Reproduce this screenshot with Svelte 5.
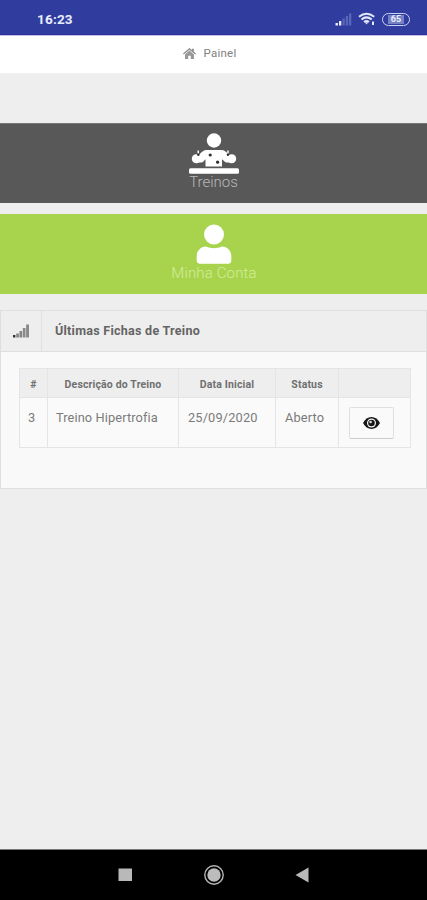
<script>
  const columns = ['#', 'Descrição do Treino', 'Data Inicial', 'Status', ''];
  const rows = [{ id: 3, name: 'Treino Hipertrofia', date: '25/09/2020', status: 'Aberto' }];
</script>

<div class="screen">
  <header class="status">
    <span class="clock">16:23</span>
    <div class="indicators">
      <svg class="signal" width="17" height="13" viewBox="0 0 17 13">
        <path d="M.5 10H3v2.500H.5zM4 8h2.300v4.500H4z" fill="#e7ebfa" />
        <path d="M7.500 5.500h2.300v7H7.500zM10.800 3h2.300v9.500h-2.300zM14 .5h2.300v12H14z" fill="#5a66b8" />
      </svg>
      <svg class="wifi" width="18" height="14" viewBox="0 0 18 14" fill="none" stroke="#e4e9fa" stroke-width="2">
        <path d="M1 4.800Q8.500-1.400 16.200 4.800M3.500 7.500Q8.500 3.300 13.700 7.500M6 10Q8.500 8 11 10" />
        <path d="M6.800 10.200h3.500l-1.800 2.400z" fill="#e4e9fa" stroke="none" />
        <path d="M15 9.500v3.500" stroke-width="2" />
      </svg>
      <span class="battery"><b>65</b></span>
    </div>
  </header>

  <nav class="crumb">
    <svg width="13" height="11" viewBox="0 0 13 11">
      <path d="M0 5.500 6.500 0 9 2.100V.7h1.800v2.900L13 5.500l-.8 1-5.700-4.800L.8 6.500z" fill="#8c8c8c" />
      <path d="m2 6.400 4.500-3.800L11 6.400V11H7.800V7.800H5.200V11H2z" fill="#999" />
    </svg>
    <span>Painel</span>
  </nav>

  <main>
    <section class="tile dark">
      <svg width="50" height="42" viewBox="0 0 50 42">
        <g fill="#fff">
          <circle cx="25" cy="7.500" r="7.200" />
          <path d="M18 17h14c3.600 0 5.600 2 8 5l-3.500 7.200-3.500-3V33.500H16.500v-7.300l-3 3L10 22c2.400-3 4.400-5 8-5z" />
          <circle cx="7.300" cy="25.800" r="4.500" />
          <circle cx="42.700" cy="25.800" r="4.500" />
          <rect x="6.500" y="22" width="8" height="7.500" rx="2" />
          <rect x="35.500" y="22" width="8" height="7.500" rx="2" />
          <path d="M8.500 17.500h1.500v3H8.500zM38.200 17.500h1.500v3h-1.500z" />
          <rect x="0" y="35.300" width="50" height="5.500" rx="1.500" />
        </g>
        <g fill="#303030">
          <circle cx="9.300" cy="21.700" r="1.200" />
          <circle cx="38.900" cy="21.700" r="1.200" />
          <circle cx="21.200" cy="22" r="1.600" />
          <circle cx="28.600" cy="29.200" r="1.600" />
        </g>
      </svg>
      <span class="treinos">Treinos</span>
    </section>

    <section class="tile green">
      <svg width="36" height="42" viewBox="0 0 36 42" fill="#fff">
        <circle cx="18" cy="10.500" r="10" />
        <path d="M10 22.400c5 2.300 11 2.300 16 0 5.500.3 9.300 4.200 9.300 9.600v4.500c0 2-1.300 3.300-3.300 3.300H4c-2 0-3.300-1.300-3.300-3.300V32c0-5.400 3.800-9.300 9.300-9.600z" />
      </svg>
      <span class="conta">Minha Conta</span>
    </section>

    <section class="panel">
      <div class="panel-head">
        <div class="panel-icon">
          <svg width="17" height="14" viewBox="0 0 17 14">
            <path d="M0 11h2.400v2.500H0z" fill="#333" />
            <path d="M3.200 9.500h2.700v4H3.200zM6.500 7h2.700v6.500H6.500z" fill="#858585" />
            <path d="M9.800 4h2.700v9.500H9.800zM13.100.5h2.900v13h-2.900z" fill="#8a8a8a" />
          </svg>
        </div>
        <h2>Últimas Fichas de Treino</h2>
      </div>
      <div class="panel-body">
        <table>
          <colgroup><col class="c1" /><col class="c2" /><col class="c3" /><col class="c4" /><col class="c5" /></colgroup>
          <thead>
            <tr>{#each columns as c}<th>{c}</th>{/each}</tr>
          </thead>
          <tbody>
            {#each rows as r}
              <tr>
                <td>{r.id}</td>
                <td>{r.name}</td>
                <td class="wide">{r.date}</td>
                <td class="wide">{r.status}</td>
                <td class="action">
                  <button aria-label="Ver">
                    <svg width="17" height="12" viewBox="0 0 17 12">
                      <path d="M0 6C2 2.200 5 0 8.500 0S15 2.200 17 6c-2 3.800-5 6-8.500 6S2 9.800 0 6z" fill="#161616" />
                      <circle cx="8.500" cy="6" r="4.500" fill="#fafafa" />
                      <circle cx="8.500" cy="6" r="3.300" fill="#161616" />
                      <circle cx="7.600" cy="5" r="1.300" fill="#ddd" />
                    </svg>
                  </button>
                </td>
              </tr>
            {/each}
          </tbody>
        </table>
      </div>
    </section>
  </main>

  <footer class="navbar">
    <svg width="14" height="14"><rect x=".5" y=".5" width="13.500" height="12.500" fill="#b9b9b9" /></svg>
    <svg width="20" height="20" viewBox="0 0 20 20">
      <circle cx="10" cy="10" r="9.200" fill="none" stroke="#b5b5b5" stroke-width="1.400" />
      <circle cx="10" cy="10" r="6.700" fill="#bcbcbc" />
    </svg>
    <svg width="14" height="16" viewBox="0 0 14 16"><path d="M.5 8 13.500.5v15z" fill="#b9b9b9" /></svg>
  </footer>
</div>

<style>
  :global(body) { margin: 0; background: #eee; }
  .screen {
    width: 427px;
    height: 900px;
    display: flex;
    flex-direction: column;
    overflow: hidden;
    background: #eee;
    color: #666;
    font-family: Roboto, sans-serif;
  }
  .status {
    box-sizing: border-box;
    height: 35px;
    flex: none;
    display: flex;
    justify-content: space-between;
    align-items: center;
    padding: 4px 17px 0 37px;
    background: #303d9f;
    border-bottom: 1px solid #2a2e98;
  }
  .clock { font-size: 13.500px; font-weight: 700; color: #e9eefc; letter-spacing: .2px; }
  .indicators { display: flex; align-items: center; gap: 6px; }
  .battery {
    box-sizing: border-box;
    width: 28px;
    height: 13px;
    border: 1.500px solid #cbd3f3;
    border-radius: 7px;
    display: flex;
    align-items: center;
    justify-content: center;
    color: #e9eefc;
  }
  .battery b { font-size: 9px; line-height: 9px; padding: 0 3px; background: #7580c5; }
  .crumb {
    box-sizing: border-box;
    height: 38px;
    flex: none;
    display: flex;
    justify-content: center;
    align-items: center;
    gap: 8px;
    padding: 0 8px 3px 0;
    background: #fff;
    border-top: 1px solid #c4c3ec;
    font-size: 11.500px;
    letter-spacing: .25px;
    color: #808080;
  }
  main { flex: 1; padding-top: 50px; }
  .tile {
    box-sizing: border-box;
    height: 80px;
    display: flex;
    flex-direction: column;
    align-items: center;
  }
  .tile svg { flex: none; }
  .tile span { font-weight: 300; font-size: 15px; line-height: 18px; }
  .dark { background: #585858; padding-top: 9px; border-top: 1px solid #777; }
  .dark .treinos { color: #b8b8b8; margin-top: -2px; }
  .green { background: #a7d44c; margin-top: 10.500px; padding-top: 10px; }
  .green .conta { color: #d3ec9f; letter-spacing: .15px; margin: -2px 0 0 1px; }
  .panel {
    box-sizing: border-box;
    height: 179px;
    margin-top: 16.500px;
    border: 1px solid #dedede;
    background: #f9f9f9;
  }
  .panel-head { height: 40px; display: flex; background: #eee; border-bottom: 1px solid #dfdfdf; }
  .panel-icon {
    width: 41px;
    display: flex;
    align-items: center;
    justify-content: center;
    padding-left: 1px;
    box-sizing: border-box;
    border-right: 1px solid #e0e0e0;
  }
  h2 { margin: 0 0 0 13px; font-size: 12.500px; line-height: 39px; font-weight: 700; letter-spacing: .27px; color: #646464; }
  .panel-body { padding: 16px 16px 0 18px; }
  table {
    width: 392px;
    table-layout: fixed;
    border-collapse: collapse;
  }
  .c1 { width: 28px; }
  .c2 { width: 131px; }
  .c3 { width: 97px; }
  .c4 { width: 63px; }
  .c5 { width: 72px; }
  th, td { box-sizing: border-box; padding: 0; border: 1px solid #e5e5e5; white-space: nowrap; }
  th { height: 29px; padding-top: 3px; background: #eee; font-size: 10.500px; font-weight: 700; letter-spacing: .15px; color: #707070; }
  td { height: 50px; vertical-align: top; padding: 12px 0 0 8px; font-size: 12.800px; line-height: 16px; letter-spacing: .1px; color: #7a7a7a; background: #fafafa; }
  td.wide { padding-left: 9px; letter-spacing: .15px; }
  td.action { padding: 9px 0 0 10px; }
  button {
    display: flex;
    align-items: center;
    justify-content: center;
    box-sizing: border-box;
    width: 45px;
    height: 32px;
    padding: 0 0 1px;
    background: #fafafa;
    border: 1px solid #e0e0e0;
    border-bottom-color: #ccc;
    border-radius: 2px;
  }
  .navbar {
    box-sizing: border-box;
    height: 51px;
    flex: none;
    display: flex;
    align-items: center;
    justify-content: space-between;
    padding: 0 118px 0 118px;
    background: #000;
    border-top: 1px solid #777;
  }
</style>
